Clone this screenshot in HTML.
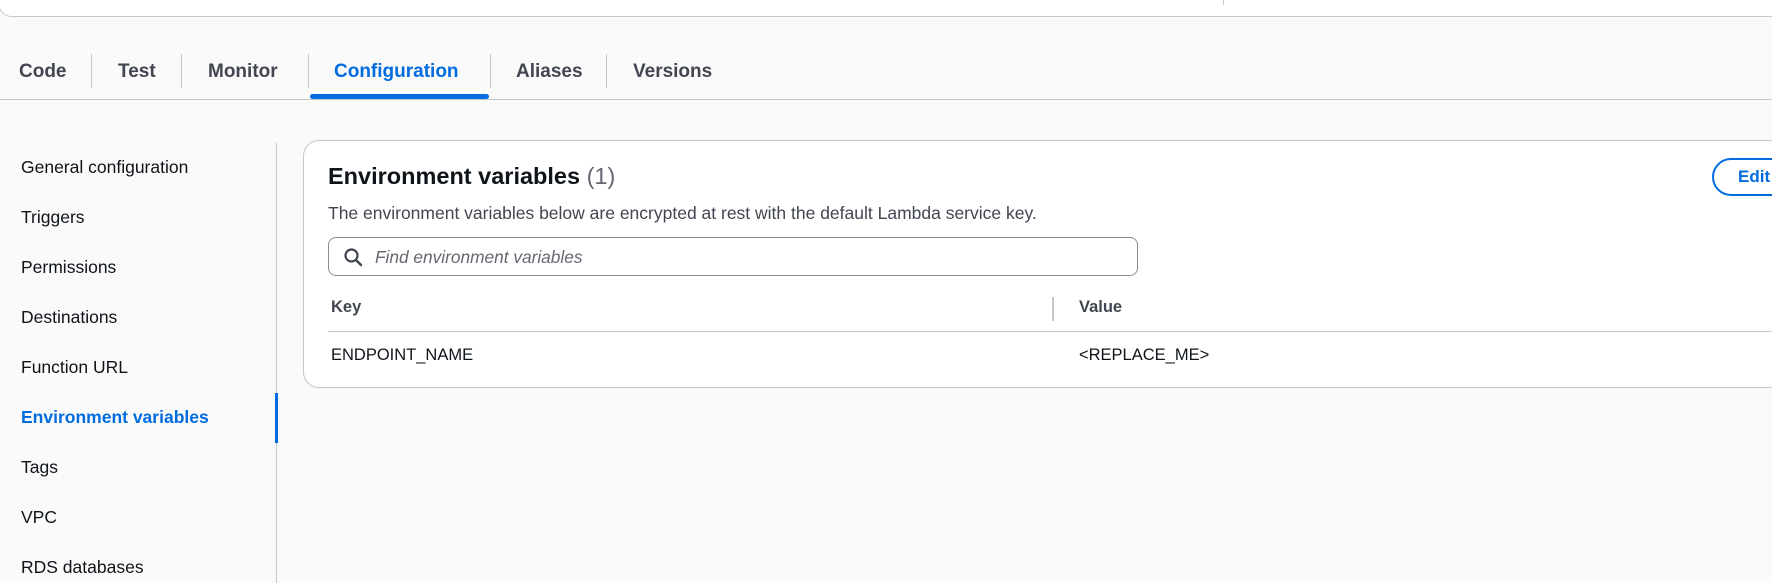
<!DOCTYPE html>
<html><head><meta charset="utf-8"><style>
*{box-sizing:border-box;margin:0;padding:0}
body{width:1772px;height:577px;overflow:hidden;background:#fafafa;font-family:"Liberation Sans",sans-serif;color:#0f141a;position:relative}
.a{position:absolute;white-space:nowrap}
.top{left:-2px;top:-20px;width:1790px;height:37px;background:#fff;border:1px solid #c6c6cd;border-radius:0 0 0 14px}
.tab{top:61px;font-size:19px;font-weight:bold;color:#424650}
.div{top:54px;width:1px;height:34px;background:#c6c6cd}
.side{left:21px;font-size:17.5px;color:#0f141a}
</style></head><body>
<div class="a top"></div>
<div class="a" style="left:1223px;top:0;width:1px;height:5px;background:#c6c6cd"></div>
<div class="a tab" style="left:19px">Code</div>
<div class="a div" style="left:91px"></div>
<div class="a tab" style="left:118px">Test</div>
<div class="a div" style="left:181px"></div>
<div class="a tab" style="left:208px">Monitor</div>
<div class="a div" style="left:308px"></div>
<div class="a tab" style="left:334px;color:#006ce0">Configuration</div>
<div class="a div" style="left:490px"></div>
<div class="a tab" style="left:516px">Aliases</div>
<div class="a div" style="left:606px"></div>
<div class="a tab" style="left:633px">Versions</div>
<div class="a" style="left:310px;top:94px;width:179px;height:5px;background:#006ce0;border-radius:3px"></div>
<div class="a" style="left:0;top:99px;width:1772px;height:1px;background:#c6c6cd"></div>

<div class="a" style="left:276px;top:143px;width:1px;height:440px;background:#c6c6cd"></div>
<div class="a" style="left:275px;top:393px;width:3px;height:50px;background:#006ce0"></div>
<div class="a side" style="top:157px">General configuration</div>
<div class="a side" style="top:207px">Triggers</div>
<div class="a side" style="top:257px">Permissions</div>
<div class="a side" style="top:307px">Destinations</div>
<div class="a side" style="top:357px">Function URL</div>
<div class="a side" style="top:407px;color:#006ce0;font-weight:bold">Environment variables</div>
<div class="a side" style="top:457px">Tags</div>
<div class="a side" style="top:507px">VPC</div>
<div class="a side" style="top:557px">RDS databases</div>

<div class="a" style="left:303px;top:140px;width:1500px;height:248px;background:#fff;border:1px solid #c6c6cd;border-radius:16px"></div>
<div class="a" style="left:328px;top:163px;font-size:23.5px;font-weight:bold">Environment variables <span style="font-weight:normal;color:#656871">(1)</span></div>
<div class="a" style="left:328px;top:203px;font-size:17.5px;color:#424650">The environment variables below are encrypted at rest with the default Lambda service key.</div>
<div class="a" style="left:328px;top:237px;width:810px;height:39px;border:1px solid #8c8c94;border-radius:8px;background:#fff"></div>
<svg class="a" style="left:343px;top:247px" width="20" height="20" viewBox="0 0 20 20"><circle cx="8.5" cy="8.5" r="6" fill="none" stroke="#424650" stroke-width="2.2"/><line x1="13" y1="13" x2="18" y2="18" stroke="#424650" stroke-width="2.4" stroke-linecap="round"/></svg>
<div class="a" style="left:375px;top:247px;font-size:17.3px;font-style:italic;color:#656871">Find environment variables</div>
<div class="a" style="left:331px;top:298px;font-size:16.5px;font-weight:bold;color:#424650">Key</div>
<div class="a" style="left:1052px;top:297px;width:2px;height:24px;background:#c6c6cd"></div>
<div class="a" style="left:1079px;top:298px;font-size:16.5px;font-weight:bold;color:#424650">Value</div>
<div class="a" style="left:328px;top:331px;width:1450px;height:1px;background:#c6c6cd"></div>
<div class="a" style="left:331px;top:346px;font-size:16.5px">ENDPOINT_NAME</div>
<div class="a" style="left:1079px;top:346px;font-size:16.5px">&lt;REPLACE_ME&gt;</div>
<div class="a" style="left:1712px;top:158px;width:100px;height:38px;border:2px solid #006ce0;border-radius:20px;background:#fff"></div>
<div class="a" style="left:1738px;top:167px;font-size:17px;font-weight:bold;color:#006ce0">Edit</div>
</body></html>
